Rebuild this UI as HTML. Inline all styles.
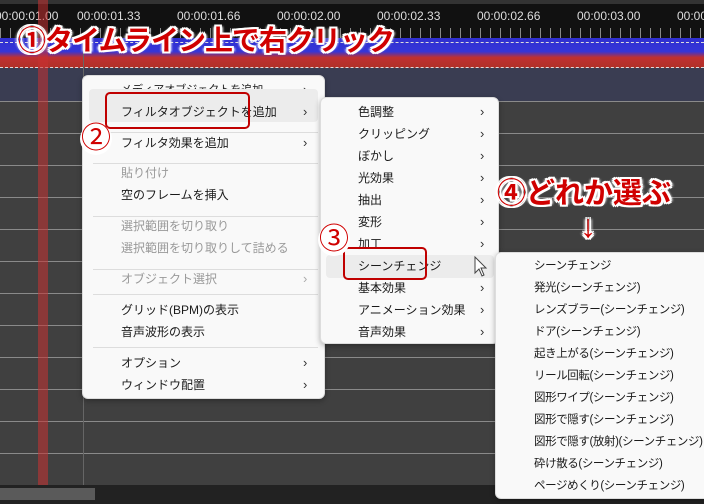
<!DOCTYPE html>
<html><head><meta charset="utf-8"><style>
*{margin:0;padding:0;box-sizing:border-box}
body{width:704px;height:504px;overflow:hidden;position:relative;background:#404040;font-family:"Liberation Sans","Noto Sans CJK JP",sans-serif;font-size:12px;color:#1a1a1a}
.abs{position:absolute}
.ruler{left:0;top:0;width:704px;height:38px;background:#111;border-top:4px solid #333}
.tick{position:absolute;top:5px;color:#ddd;font-size:12px}
.gl{position:absolute;left:0;width:704px;height:1px;background:#8a8a8a}
.menu{position:absolute;background:#f9f9f9;border:1px solid #ddd;border-radius:6px;box-shadow:0 2px 6px rgba(0,0,0,.3)}
.it{position:absolute;left:0;right:0;height:22px;line-height:22px;white-space:nowrap}
.it span{position:absolute}
.ar{position:absolute;font-size:13px;color:#333}
.dis{color:#999}
.sep{position:absolute;height:1px;background:#ddd}
.ann{position:absolute;color:#d00000;font-weight:bold;text-shadow:2px 0 0 #fff,-2px 0 0 #fff,0 2px 0 #fff,0 -2px 0 #fff,2px 2px 0 #fff,-2px -2px 0 #fff,2px -2px 0 #fff,-2px 2px 0 #fff,3px 0 2px #fff,-3px 0 2px #fff;white-space:nowrap}
.circ{position:absolute;width:32px;height:32px;border-radius:50%;background:#fff;color:#d00000;font-size:30px;line-height:31px;text-align:center}
.box{position:absolute;border:2.5px solid #c00000;border-radius:5px}
.m3 .it{font-size:11.5px;letter-spacing:-0.4px}
</style></head><body>
<div class="abs ruler">
<span class="tick" style="left:-5px">00:00:01.00</span>
<span class="tick" style="left:77px">00:00:01.33</span>
<span class="tick" style="left:177px">00:00:01.66</span>
<span class="tick" style="left:277px">00:00:02.00</span>
<span class="tick" style="left:377px">00:00:02.33</span>
<span class="tick" style="left:477px">00:00:02.66</span>
<span class="tick" style="left:577px">00:00:03.00</span>
<span class="tick" style="left:677px">00:00:</span>
<div class="abs" style="left:0;top:24px;width:704px;height:10px;background:repeating-linear-gradient(90deg,#888 0 1px,transparent 1px 10px)"></div>
</div>
<div class="abs" style="left:0;top:38px;width:704px;height:30px;background:linear-gradient(#3030d0 0,#3535d8 45%,#c03030 65%,#b03028 100%)"></div>
<div class="abs" style="left:0;top:42px;width:704px;border-top:1px dashed #ddd"></div>
<div class="abs" style="left:0;top:67px;width:704px;border-top:1px dashed #ddd"></div>
<div class="abs" style="left:0;top:68px;width:704px;height:33px;background:#3a3d52"></div>
<div class="gl" style="top:101px"></div><div class="gl" style="top:133px"></div><div class="gl" style="top:165px"></div><div class="gl" style="top:197px"></div><div class="gl" style="top:229px"></div><div class="gl" style="top:261px"></div><div class="gl" style="top:293px"></div><div class="gl" style="top:325px"></div><div class="gl" style="top:357px"></div><div class="gl" style="top:389px"></div><div class="gl" style="top:421px"></div><div class="gl" style="top:453px"></div>
<div class="abs" style="left:38px;top:0;width:10px;height:485px;background:rgba(200,50,50,.55)"></div>
<div class="abs" style="left:83px;top:38px;width:1px;height:447px;background:#666"></div>
<div class="abs" style="left:0;top:485px;width:704px;height:19px;background:#222"></div>
<div class="abs" style="left:0;top:488px;width:95px;height:12px;background:#5a5a5a"></div>

<div class="menu" style="left:82px;top:75px;width:243px;height:324px">
<div class="it" style="top:3px"><span style="left:38px;font-size:11px">メディアオブジェクトを追加</span><span class="ar" style="left:220px">›</span></div>
<div class="it" style="top:13px;height:33px;left:6px;right:6px;background:#ececec;border-radius:4px"></div>
<div class="it" style="top:25px"><span style="left:38px">フィルタオブジェクトを追加</span><span class="ar" style="left:220px">›</span></div>
<div class="sep" style="left:10px;right:6px;top:56px"></div>
<div class="it" style="top:56px"><span style="left:38px">フィルタ効果を追加</span><span class="ar" style="left:220px">›</span></div>
<div class="sep" style="left:10px;right:6px;top:87px"></div>
<div class="it dis" style="top:86px"><span style="left:38px">貼り付け</span></div>
<div class="it" style="top:108px"><span style="left:38px">空のフレームを挿入</span></div>
<div class="sep" style="left:10px;right:6px;top:140px"></div>
<div class="it dis" style="top:139px"><span style="left:38px">選択範囲を切り取り</span></div>
<div class="it dis" style="top:161px"><span style="left:38px">選択範囲を切り取りして詰める</span></div>
<div class="sep" style="left:10px;right:6px;top:193px"></div>
<div class="it dis" style="top:192px"><span style="left:38px">オブジェクト選択</span><span class="ar" style="left:220px;color:#aaa">›</span></div>
<div class="sep" style="left:10px;right:6px;top:218px"></div>
<div class="it" style="top:223px"><span style="left:38px">グリッド(BPM)の表示</span></div>
<div class="it" style="top:245px"><span style="left:38px">音声波形の表示</span></div>
<div class="sep" style="left:10px;right:6px;top:271px"></div>
<div class="it" style="top:276px"><span style="left:38px">オプション</span><span class="ar" style="left:220px">›</span></div>
<div class="it" style="top:298px"><span style="left:38px">ウィンドウ配置</span><span class="ar" style="left:220px">›</span></div>
</div>

<div class="menu" style="left:320px;top:97px;width:179px;height:247px">
<div class="abs" style="left:5px;top:157px;width:168px;height:23px;background:#ececec;border-radius:4px"></div>
<div class="it" style="top:3px"><span style="left:37px">色調整</span><span class="ar" style="left:159px">›</span></div>
<div class="it" style="top:25px"><span style="left:37px">クリッピング</span><span class="ar" style="left:159px">›</span></div>
<div class="it" style="top:47px"><span style="left:37px">ぼかし</span><span class="ar" style="left:159px">›</span></div>
<div class="it" style="top:69px"><span style="left:37px">光効果</span><span class="ar" style="left:159px">›</span></div>
<div class="it" style="top:91px"><span style="left:37px">抽出</span><span class="ar" style="left:159px">›</span></div>
<div class="it" style="top:113px"><span style="left:37px">変形</span><span class="ar" style="left:159px">›</span></div>
<div class="it" style="top:135px"><span style="left:37px">加工</span><span class="ar" style="left:159px">›</span></div>
<div class="it" style="top:157px"><span style="left:37px">シーンチェンジ</span><span class="ar" style="left:159px">›</span></div>
<div class="it" style="top:179px"><span style="left:37px">基本効果</span><span class="ar" style="left:159px">›</span></div>
<div class="it" style="top:201px"><span style="left:37px">アニメーション効果</span><span class="ar" style="left:159px">›</span></div>
<div class="it" style="top:223px"><span style="left:37px">音声効果</span><span class="ar" style="left:159px">›</span></div>
</div>

<div class="menu m3" style="left:495px;top:252px;width:215px;height:247px">
<div class="it" style="top:2px"><span style="left:38px">シーンチェンジ</span></div>
<div class="it" style="top:24px"><span style="left:38px">発光(シーンチェンジ)</span></div>
<div class="it" style="top:46px"><span style="left:38px">レンズブラー(シーンチェンジ)</span></div>
<div class="it" style="top:68px"><span style="left:38px">ドア(シーンチェンジ)</span></div>
<div class="it" style="top:90px"><span style="left:38px">起き上がる(シーンチェンジ)</span></div>
<div class="it" style="top:112px"><span style="left:38px">リール回転(シーンチェンジ)</span></div>
<div class="it" style="top:134px"><span style="left:38px">図形ワイプ(シーンチェンジ)</span></div>
<div class="it" style="top:156px"><span style="left:38px">図形で隠す(シーンチェンジ)</span></div>
<div class="it" style="top:178px"><span style="left:38px">図形で隠す(放射)(シーンチェンジ)</span></div>
<div class="it" style="top:200px"><span style="left:38px">砕け散る(シーンチェンジ)</span></div>
<div class="it" style="top:222px"><span style="left:38px">ページめくり(シーンチェンジ)</span></div>
</div>

<svg class="abs" style="left:473px;top:256px" width="16" height="22" viewBox="0 0 16 22"><path d="M2 1 L2 17 L6 13 L9 20 L11 19 L8 12 L13 12 Z" fill="#fff" stroke="#444" stroke-width="1"/></svg>

<div class="box" style="left:105px;top:92px;width:145px;height:37px"></div>
<div class="box" style="left:343px;top:247px;width:84px;height:33px"></div>

<div class="ann" style="left:18px;top:19px;font-size:28px;letter-spacing:-1px">①タイムライン上で右クリック</div>
<div class="circ" style="left:80px;top:123px">②</div>
<div class="circ" style="left:318px;top:224px">③</div>
<div class="ann" style="left:497px;top:170px;font-size:29px">④どれか選ぶ</div>
<div class="ann" style="left:580px;top:208px;font-size:32px">↓</div>
</body></html>
